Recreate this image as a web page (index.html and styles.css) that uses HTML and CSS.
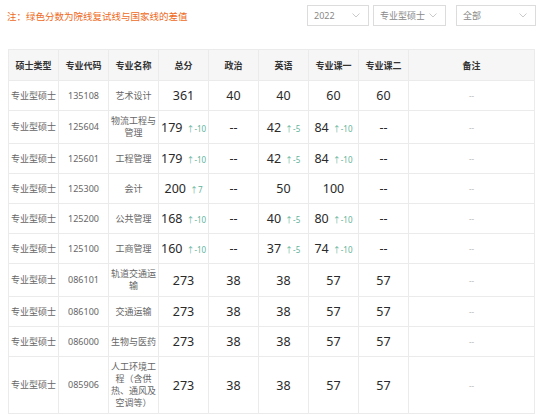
FILE: index.html
```html
<!DOCTYPE html>
<html lang="zh-CN">
<head>
<meta charset="utf-8">
<link rel="stylesheet" href="styles.css">
</head>
<body>
<div class="page">
  <div class="topbar">
    <div class="note">注：绿色分数为院线复试线与国家线的差值</div>
    <div class="filters">
      <div class="select s1"><span>2022</span><svg class="chev" viewBox="0 0 8 5" width="8" height="5"><path d="M0.5 0.5 L4 4 L7.5 0.5" fill="none" stroke="#c4c4c4" stroke-width="0.9"/></svg></div>
      <div class="select s2"><span>专业型硕士</span><svg class="chev" viewBox="0 0 8 5" width="8" height="5"><path d="M0.5 0.5 L4 4 L7.5 0.5" fill="none" stroke="#c4c4c4" stroke-width="0.9"/></svg></div>
      <div class="select s3"><span>全部</span><svg class="chev" viewBox="0 0 8 5" width="8" height="5"><path d="M0.5 0.5 L4 4 L7.5 0.5" fill="none" stroke="#c4c4c4" stroke-width="0.9"/></svg></div>
    </div>
  </div>
  <table class="grid">
    <colgroup>
      <col class="c"><col class="c"><col class="c"><col class="c"><col class="c"><col class="c"><col class="c"><col class="c"><col class="last">
    </colgroup>
    <thead>
      <tr><th>硕士类型</th><th>专业代码</th><th>专业名称</th><th>总分</th><th>政治</th><th>英语</th><th>专业课一</th><th>专业课二</th><th>备注</th></tr>
    </thead>
    <tbody>
      <tr><td class="t">专业型硕士</td><td class="t">135108</td><td class="t">艺术设计</td><td class="n">361</td><td class="n">40</td><td class="n">40</td><td class="n">60</td><td class="n">60</td><td class="r">--</td></tr>
      <tr><td class="t">专业型硕士</td><td class="t">125604</td><td class="t">物流工程与管理</td><td class="n">179<span class="d">↑-10</span></td><td class="n">--</td><td class="n">42<span class="d">↑-5</span></td><td class="n">84<span class="d">↑-10</span></td><td class="n">--</td><td class="r">--</td></tr>
      <tr><td class="t">专业型硕士</td><td class="t">125601</td><td class="t">工程管理</td><td class="n">179<span class="d">↑-10</span></td><td class="n">--</td><td class="n">42<span class="d">↑-5</span></td><td class="n">84<span class="d">↑-10</span></td><td class="n">--</td><td class="r">--</td></tr>
      <tr><td class="t">专业型硕士</td><td class="t">125300</td><td class="t">会计</td><td class="n">200<span class="d">↑7</span></td><td class="n">--</td><td class="n">50</td><td class="n">100</td><td class="n">--</td><td class="r">--</td></tr>
      <tr><td class="t">专业型硕士</td><td class="t">125200</td><td class="t">公共管理</td><td class="n">168<span class="d">↑-10</span></td><td class="n">--</td><td class="n">40<span class="d">↑-5</span></td><td class="n">80<span class="d">↑-10</span></td><td class="n">--</td><td class="r">--</td></tr>
      <tr><td class="t">专业型硕士</td><td class="t">125100</td><td class="t">工商管理</td><td class="n">160<span class="d">↑-10</span></td><td class="n">--</td><td class="n">37<span class="d">↑-5</span></td><td class="n">74<span class="d">↑-10</span></td><td class="n">--</td><td class="r">--</td></tr>
      <tr><td class="t">专业型硕士</td><td class="t">086101</td><td class="t">轨道交通运输</td><td class="n">273</td><td class="n">38</td><td class="n">38</td><td class="n">57</td><td class="n">57</td><td class="r">--</td></tr>
      <tr><td class="t">专业型硕士</td><td class="t">086100</td><td class="t">交通运输</td><td class="n">273</td><td class="n">38</td><td class="n">38</td><td class="n">57</td><td class="n">57</td><td class="r">--</td></tr>
      <tr><td class="t">专业型硕士</td><td class="t">086000</td><td class="t">生物与医药</td><td class="n">273</td><td class="n">38</td><td class="n">38</td><td class="n">57</td><td class="n">57</td><td class="r">--</td></tr>
      <tr><td class="t">专业型硕士</td><td class="t">085906</td><td class="t">人工环境工程（含供热、通风及空调等）</td><td class="n">273</td><td class="n">38</td><td class="n">38</td><td class="n">57</td><td class="n">57</td><td class="r">--</td></tr>
    </tbody>
  </table>
</div>
</body>
</html>
```
FILE: styles.css
```css
html, body {
  margin: 0;
  padding: 0;
  background: #ffffff;
}
body {
  font-family: "Noto Sans", "Noto Sans CJK SC", sans-serif;
  color: #333333;
}
.page {
  padding: 5px 7px 0 8px;
}
.topbar {
  display: flex;
  justify-content: space-between;
  align-items: center;
  height: 21px;
}
.note {
  margin-left: -1px;
  font-size: 9.5px;
  color: #ee6a1c;
  font-family: "Noto Sans CJK SC", sans-serif;
}
.filters {
  display: flex;
  gap: 4px;
  margin-right: -2px;
}
.select {
  box-sizing: border-box;
  height: 21px;
  border: 1px solid #dcdcdc;
  display: flex;
  align-items: center;
  justify-content: space-between;
  padding: 0 8px 0 6px;
  font-size: 9px;
  color: #888888;
  font-family: "Noto Sans", "Noto Sans CJK SC", sans-serif;
}
.s1 { width: 62px; }
.s2 { width: 73px; }
.s3 { width: 80px; margin-left: 6px; }
.chev { display: block; }
.grid {
  margin-top: 23px;
  border-collapse: collapse;
  table-layout: fixed;
  width: 526px;
}
.grid col.c { width: 50px; }
.grid col.last { width: 126px; }
.grid th, .grid td {
  border: 1px solid #ebebeb;
  text-align: center;
  vertical-align: middle;
  padding: 4px 2px;
}
.grid th {
  background: #f6f6f6;
  height: 22px;
  font-size: 9px;
  font-weight: bold;
  color: #333333;
  font-family: "Noto Sans CJK SC", sans-serif;
}
.grid td {
  height: 21px;
}
.grid td.t {
  font-size: 9px;
  line-height: 12px;
  color: #666666;
  font-family: "Noto Sans", "Noto Sans CJK SC", sans-serif;
  word-break: break-all;
}
.grid td.n {
  font-size: 12.5px;
  color: #2a2a2a;
  white-space: nowrap;
}
.grid td.r {
  font-size: 8px;
  color: #bbbbbb;
}
.d {
  font-size: 8px;
  color: #5fb39a;
  margin-left: 4px;
}
```
